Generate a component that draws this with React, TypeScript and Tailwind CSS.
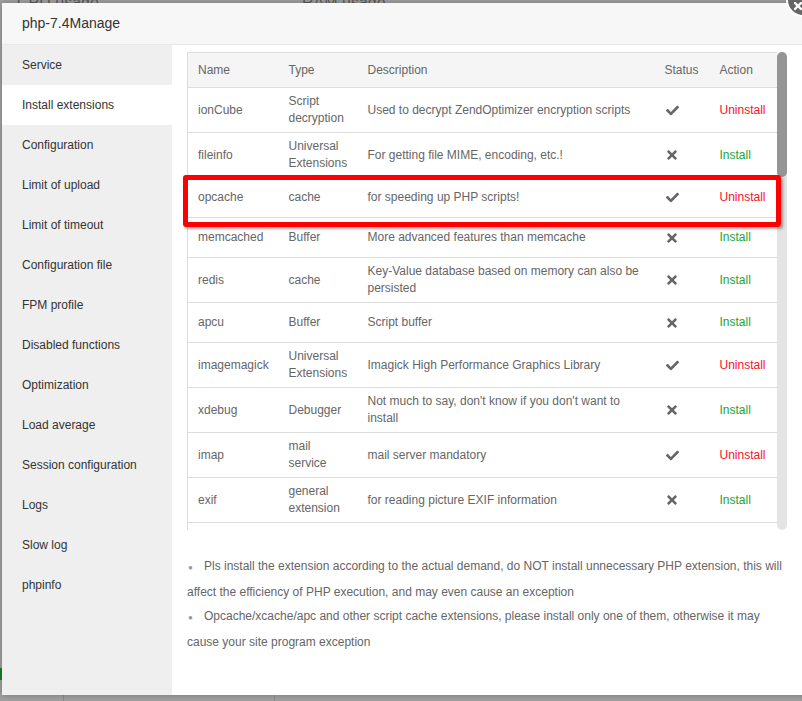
import { FaCheck, FaTimes } from 'react-icons/fa'

type Ext = {
  name: string
  type: string
  desc: string
  installed: boolean
}

const EXTENSIONS: Ext[] = [
  { name: 'ionCube', type: 'Script decryption', desc: 'Used to decrypt ZendOptimizer encryption scripts', installed: true },
  { name: 'fileinfo', type: 'Universal Extensions', desc: 'For getting file MIME, encoding, etc.!', installed: false },
  { name: 'opcache', type: 'cache', desc: 'for speeding up PHP scripts!', installed: true },
  { name: 'memcached', type: 'Buffer', desc: 'More advanced features than memcache', installed: false },
  { name: 'redis', type: 'cache', desc: 'Key-Value database based on memory can also be persisted', installed: false },
  { name: 'apcu', type: 'Buffer', desc: 'Script buffer', installed: false },
  { name: 'imagemagick', type: 'Universal Extensions', desc: 'Imagick High Performance Graphics Library', installed: true },
  { name: 'xdebug', type: 'Debugger', desc: "Not much to say, don't know if you don't want to install", installed: false },
  { name: 'imap', type: 'mail service', desc: 'mail server mandatory', installed: true },
  { name: 'exif', type: 'general extension', desc: 'for reading picture EXIF information', installed: false },
  { name: 'intl', type: 'general extension', desc: 'Provides internationalization support', installed: false },
  { name: 'xsl', type: 'general extension', desc: 'xsl parsing extension', installed: false },
]

const MENU = [
  'Service',
  'Install extensions',
  'Configuration',
  'Limit of upload',
  'Limit of timeout',
  'Configuration file',
  'FPM profile',
  'Disabled functions',
  'Optimization',
  'Load average',
  'Session configuration',
  'Logs',
  'Slow log',
  'phpinfo',
]

export default function App() {
  return (
    <div className="relative h-[701px] w-[802px] overflow-hidden bg-[#9f9f9f] font-['Liberation_Sans',Arial,sans-serif]">
      {/* page behind the overlay */}
      <div className="absolute left-[17px] top-[-9px] text-[16px] text-[#5a5a5a]">CPU usage</div>
      <div className="absolute left-[302px] top-[-9px] text-[16px] text-[#5a5a5a]">RAM usage</div>
      <div className="absolute left-0 top-[668px] h-[12px] w-[2px] bg-[#1e7a2e]" />
      <div className="absolute left-[63px] top-[695px] h-[6px] w-px bg-[#8a8a8a]" />
      <div className="absolute left-[274px] top-[695px] h-[6px] w-px bg-[#8a8a8a]" />

      {/* dialog */}
      <div className="absolute left-[2px] top-[3px] flex h-[692px] w-[812px] flex-col bg-white shadow-[0_0_6px_rgba(0,0,0,0.25)]">
        <div className="flex h-[42px] shrink-0 items-center border-b border-[#e8e8e8] bg-[#f7f7f7] pl-[20px] text-[14px] text-[#333]">
          php-7.4Manage
        </div>
        <div className="flex min-h-0 flex-1">
          <div className="w-[170px] shrink-0 bg-[#efefef]">
            {MENU.map((m) => (
              <div
                key={m}
                className={
                  'flex h-[40px] items-center pl-[20px] text-[12px] text-[#333] ' +
                  (m === 'Install extensions' ? 'bg-white' : '')
                }
              >
                {m}
              </div>
            ))}
          </div>

          <div className="flex-1 px-[15px] pt-[7px]">
            <div className="flex w-[600px]">
              <div className="h-[478px] w-[590px] overflow-hidden">
                <table className="w-[590px] table-fixed border-collapse border border-[#ddd] text-[12px] leading-[17px] text-[#666]">
                  <colgroup>
                    <col className="w-[91px]" />
                    <col className="w-[79px]" />
                    <col className="w-[297px]" />
                    <col className="w-[55px]" />
                    <col className="w-[68px]" />
                  </colgroup>
                  <thead>
                    <tr className="h-[35px] border-b border-[#ddd] bg-[#f5f5f5]">
                      <th className="px-[10px] text-left font-normal">Name</th>
                      <th className="px-[10px] text-left font-normal">Type</th>
                      <th className="px-[10px] text-left font-normal">Description</th>
                      <th className="px-[10px] text-left font-normal">Status</th>
                      <th className="px-[10px] text-left font-normal">Action</th>
                    </tr>
                  </thead>
                  <tbody>
                    {EXTENSIONS.map((e) => (
                      <tr key={e.name} className="h-[40px] border-b border-[#ddd]">
                        <td className="px-[10px] py-[5px]">{e.name}</td>
                        <td className="px-[10px] py-[5px]">{e.type}</td>
                        <td className="px-[10px] py-[5px]">{e.desc}</td>
                        <td className="px-[10px] py-[5px]">
                          {e.installed ? (
                            <FaCheck className="ml-[1px] h-[13px] w-[13px] text-[#666]" />
                          ) : (
                            <FaTimes className="ml-[1px] h-[14px] w-[12px] text-[#666]" />
                          )}
                        </td>
                        <td className="px-[10px] py-[5px]">
                          {e.installed ? (
                            <span className="text-[#f5132e]">Uninstall</span>
                          ) : (
                            <span className="text-[#20a53a]">Install</span>
                          )}
                        </td>
                      </tr>
                    ))}
                  </tbody>
                </table>
              </div>
              {/* scrollbar */}
              <div className="h-[478px] w-[10px] rounded-[5px] bg-[#e4e4e4]">
                <div className="h-[125px] w-[10px] rounded-[5px] bg-[#959595]" />
              </div>
            </div>

            <ul className="mt-[24px] w-[600px] text-[12px] leading-[24px] text-[#666]">
              <li>
                <span className="inline-block w-[17px] pl-[1px] text-[8px] text-[#999]">●</span>
                Pls install the extension according to the actual demand, do NOT install unnecessary PHP extension, this will
                affect the efficiency of PHP execution, and may even cause an exception
              </li>
              <li>
                <span className="inline-block w-[17px] pl-[1px] text-[8px] text-[#999]">●</span>
                Opcache/xcache/apc and other script cache extensions, please install only one of them, otherwise it may cause
                your site program exception
              </li>
            </ul>
          </div>
        </div>
      </div>

      {/* highlight box */}
      <div className="absolute left-[183px] top-[175px] h-[52px] w-[598px] rounded-[3px] border-[5px] border-[#ff0000] shadow-[2px_2px_3px_rgba(0,0,0,0.35)]" />

      {/* close button */}
      <div className="absolute left-[786px] top-[-17px] flex h-[34px] w-[34px] items-center justify-center rounded-full border-[2px] border-white bg-[#666]">
        <FaTimes className="mr-[10px] mt-[12px] h-[12px] w-[12px] text-white" />
      </div>
    </div>
  )
}
